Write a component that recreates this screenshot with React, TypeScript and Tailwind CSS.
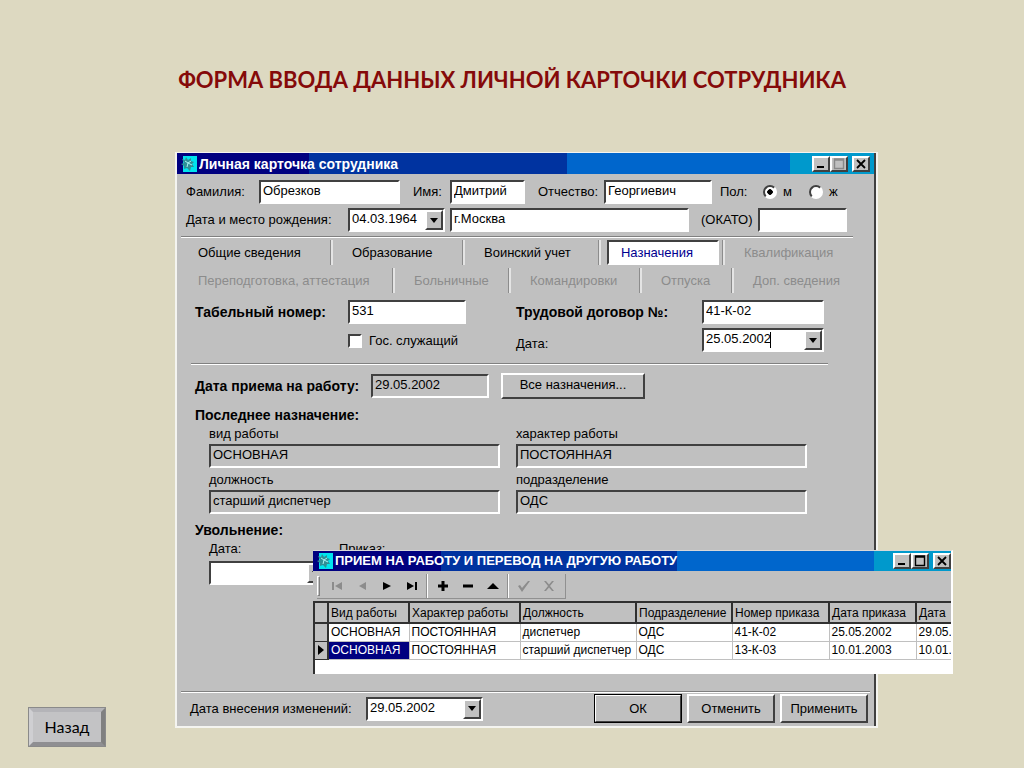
import type { ReactNode } from "react";
import clsx from "clsx";

const sunken =
  "border-2 border-t-[#404040] border-l-[#404040] border-r-white border-b-white";
const raised =
  "border-2 border-t-white border-l-white border-r-[#404040] border-b-[#404040]";

const AppIcon = () => (
  <svg viewBox="0 0 16 16" className="h-4 w-4 shrink-0" aria-hidden="true">
    <rect x="2" width="14" height="16" fill="#00e5ee" />
    <path
      d="M1 3l3 1 1-3 2 3 3-2 0 3 3 1-2 2 2 3-3 0-1 4-3-3-3 1 0-3-3-2 3-1z"
      fill="#2f8f96"
    />
    <path d="M4 5l3 2 3-2M7 7l-1 4M7 7l4 2" stroke="#a8f4f4" fill="none" />
  </svg>
);

const WindowButton = ({
  label,
  className,
  children,
}: {
  label: string;
  className?: string;
  children: ReactNode;
}) => (
  <button
    type="button"
    aria-label={label}
    className={clsx("h-4 w-[18px] bg-[#c0c0c0]", raised, className)}
  >
    <svg viewBox="0 0 14 12" className="h-3 w-3.5" aria-hidden="true">
      {children}
    </svg>
  </button>
);

const TitleBar = ({
  title,
  dimMaximize,
  className,
}: {
  title: string;
  dimMaximize?: boolean;
  className: string;
}) => (
  <header className={clsx("flex items-center font-bold", className)}>
    <AppIcon />
    <h2 className="ml-0.5 flex-1 truncate text-white">{title}</h2>
    <WindowButton label="Свернуть">
      <rect x="3" y="8" width="7" height="2" />
    </WindowButton>
    <WindowButton label="Развернуть">
      <path
        d="M2.5 1v9.5h9V1zM2 2h10"
        fill="none"
        stroke={dimMaximize ? "#888888" : "#000000"}
        strokeWidth="1.4"
      />
    </WindowButton>
    <WindowButton label="Закрыть" className="ml-1">
      <path d="M3 2l8 8M11 2l-8 8" stroke="#000" strokeWidth="1.8" />
    </WindowButton>
  </header>
);

const Field = ({
  id,
  value,
  className,
  readOnly,
}: {
  id: string;
  value?: string;
  className: string;
  readOnly?: boolean;
}) => (
  <input
    id={id}
    type="text"
    defaultValue={value}
    readOnly={readOnly}
    className={clsx(
      "h-6 px-0.5 pb-1 outline-none",
      sunken,
      readOnly ? "bg-[#c0c0c0]" : "bg-white",
      className
    )}
  />
);

const DateSelect = ({
  id,
  value,
  className,
  caret,
}: {
  id: string;
  value: string;
  className: string;
  caret?: boolean;
}) => (
  <div className={clsx("relative h-6 bg-white", sunken, className)}>
    <select
      id={id}
      defaultValue={value}
      className="block h-5 w-full appearance-none px-0.5 pb-0.5 outline-none"
    >
      <option>{value}</option>
    </select>
    {caret && (
      <span className="pointer-events-none absolute top-0.5 left-[66px] h-4 w-px bg-black" />
    )}
    <span
      className={clsx(
        "pointer-events-none absolute top-0 right-0 flex h-5 w-[18px] items-center justify-center bg-[#c0c0c0]",
        raised
      )}
    >
      <svg viewBox="0 0 8 5" className="h-[5px] w-2" aria-hidden="true">
        <path d="M0 0h8L4 5z" />
      </svg>
    </span>
  </div>
);

const Divider = ({ className }: { className?: string }) => (
  <hr
    className={clsx(
      "h-0.5 border-0 border-t border-b border-t-[#808080] border-b-white",
      className
    )}
  />
);

const Tab = ({
  children,
  className,
  disabled,
}: {
  children: ReactNode;
  className?: string;
  disabled?: boolean;
}) => (
  <button
    type="button"
    role="tab"
    aria-selected={false}
    disabled={disabled}
    className={clsx(
      "h-[25px] pl-[19px] text-left whitespace-nowrap disabled:text-[#8c8c8c]",
      className
    )}
  >
    {children}
  </button>
);

const tabEdge = "border-r-2 border-r-[#e4e4e4] shadow-[inset_-1px_0_0_#8c8c8c]";

const NavButton = ({
  label,
  disabled,
  d,
}: {
  label: string;
  disabled?: boolean;
  d: string;
}) => (
  <button
    type="button"
    aria-label={label}
    disabled={disabled}
    className="flex h-6 w-[25px] items-center justify-center text-black disabled:text-[#8c8c8c]"
  >
    <svg
      viewBox="0 0 12 12"
      className="h-3 w-3"
      fill="currentColor"
      aria-hidden="true"
    >
      <path d={d} />
    </svg>
  </button>
);

const columns = [
  "Вид работы",
  "Характер работы",
  "Должность",
  "Подразделение",
  "Номер приказа",
  "Дата приказа",
  "Дата",
];

const rows = [
  ["ОСНОВНАЯ", "ПОСТОЯННАЯ", "диспетчер", "ОДС", "41-К-02", "25.05.2002", "29.05."],
  ["ОСНОВНАЯ", "ПОСТОЯННАЯ", "старший диспетчер", "ОДС", "13-К-03", "10.01.2003", "10.01."],
];

const TransfersWindow = () => (
  <section className="absolute top-[397px] -right-[77px] left-[136px] border-t border-r-2 border-t-[#d8d8d8] border-r-white bg-[#c0c0c0]">
    <TitleBar
      title="ПРИЕМ НА РАБОТУ И ПЕРЕВОД НА ДРУГУЮ РАБОТУ"
      className="h-5 bg-[linear-gradient(90deg,#000080_20%,#0033a0_20%,#0033a0_57%,#0066cc_57%,#0066cc_88%,#0099cc_88%)] pl-1"
    />
    <div className="flex h-[30px] items-center pl-1">
      <div className="flex items-center border-r border-b border-[#909090] pr-1">
        <span className="mr-1 h-5 w-[3px] border border-t-white border-r-[#808080] border-b-[#808080] border-l-white" />
        <NavButton label="Первая" disabled d="M1 2h2v8h-2zM11 2v8L4 6z" />
        <NavButton label="Предыдущая" disabled d="M10 2v8L3 6z" />
        <NavButton label="Следующая" d="M2 2v8l8-4z" />
        <NavButton label="Последняя" d="M1 2v8l7-4zM9 2h2v8h-2z" />
        <span className="mx-0.5 h-6 w-0.5 border-r border-l border-r-white border-l-[#909090]" />
        <NavButton label="Добавить" d="M4.500 1h3v3.500h3.500v3h-3.500v3.500h-3v-3.500h-3.500v-3h3.500z" />
        <NavButton label="Удалить" d="M1 4.500h10v3h-10z" />
        <NavButton label="Изменить" d="M0 9h12L6 3z" />
        <span className="mx-0.5 h-6 w-0.5 border-r border-l border-r-white border-l-[#909090]" />
        <NavButton label="Сохранить" disabled d="M0 6l2-1 2 3 6-7 2 0-8 11z" />
        <NavButton label="Отмена" disabled d="M1 1h2l3 3.500 3-3.500h2l-4 5 4 5h-2l-3-3.500-3 3.500h-2l4-5z" />
      </div>
    </div>
    <div className="overflow-hidden border-t-2 border-l-2 border-[#303030] bg-white pb-3.5">
      <table className="w-full table-fixed border-collapse text-[12px] leading-4">
        <colgroup>
          <col className="w-[13px]" />
          <col className="w-[81px]" />
          <col className="w-[111px]" />
          <col className="w-[116px]" />
          <col className="w-[96px]" />
          <col className="w-[97px]" />
          <col className="w-[87px]" />
          <col />
        </colgroup>
        <thead>
          <tr className="h-5 bg-[#c0c0c0]">
            <th className="border-r-2 border-b-2 border-[#303030]" />
            {columns.map((name, i) => (
              <th
                key={i}
                scope="col"
                className="border-r-2 border-b-2 border-[#303030] pl-0.5 text-left font-normal whitespace-nowrap last:border-r-0"
              >
                {name}
              </th>
            ))}
          </tr>
        </thead>
        <tbody>
          {rows.map((row, r) => (
            <tr key={r} className="h-[18px]">
              <td className="border-r-2 border-b border-[#303030] bg-[#c0c0c0]">
                {r === 1 && (
                  <svg viewBox="0 0 6 10" className="mx-auto h-2.5 w-1.5">
                    <path d="M0 0v10l6-5z" />
                  </svg>
                )}
              </td>
              {row.map((cell, c) => (
                <td
                  key={c}
                  className={clsx(
                    "border-r border-b border-[#c0c0c0] pl-0.5 whitespace-nowrap last:border-r-0",
                    r === 1 && c === 0 && "bg-[#000080] text-white"
                  )}
                >
                  {cell}
                </td>
              ))}
            </tr>
          ))}
        </tbody>
      </table>
    </div>
  </section>
);

const assignments = [
  { id: "kind", label: "вид работы", value: "ОСНОВНАЯ" },
  { id: "nature", label: "характер работы", value: "ПОСТОЯННАЯ" },
  { id: "position", label: "должность", value: "старший диспетчер" },
  { id: "unit", label: "подразделение", value: "ОДС" },
];

const strong = "text-[14px] leading-4 font-bold";
const radio =
  "h-3.5 w-3.5 appearance-none rounded-full bg-white checked:bg-[radial-gradient(circle,#000_2.5px,#fff_3px)]";
const footerButton = "h-[29px] w-[88px] bg-[#c0c0c0]";

const EmployeeCard = () => (
  <section className="relative mr-[146px] mb-[19px] min-w-0 flex-1 border-2 border-t border-[#f4f4f0] bg-[#c0c0c0] font-['Liberation_Sans',Arial,sans-serif] text-[13px] leading-4 text-black">
    <div className="border-r-2 border-[#404040]">
      <TitleBar
        title="Личная карточка сотрудника"
        dimMaximize
        className="h-[21px] bg-[linear-gradient(90deg,#000080_19%,#0033a0_19%,#0033a0_56%,#0066cc_56%,#0066cc_88%,#0099cc_88%)] pr-1 pl-1 text-[14px]"
      />

      <div className="mt-1.5 flex items-center pl-[9px]">
        <label htmlFor="surname" className="w-[73px]">Фамилия:</label>
        <Field id="surname" value="Обрезков" className="w-[141px]" />
        <label htmlFor="name" className="ml-[13px] w-[37px]">Имя:</label>
        <Field id="name" value="Дмитрий" className="w-[75px]" />
        <label htmlFor="patronymic" className="ml-[13px] w-[66px]">Отчество:</label>
        <Field id="patronymic" value="Георгиевич" className="w-[108px]" />
        <fieldset className="ml-2 flex items-center">
          <legend className="float-left w-[43px]">Пол:</legend>
          <label className="flex w-[46px] items-center gap-1.5">
            <input type="radio" name="sex" defaultChecked className={clsx(radio, sunken)} />
            м
          </label>
          <label className="flex items-center gap-1.5">
            <input type="radio" name="sex" className={clsx(radio, sunken)} />
            ж
          </label>
        </fieldset>
      </div>

      <div className="mt-1 flex items-center pl-[9px]">
        <label htmlFor="birth" className="w-[162px]">Дата и место рождения:</label>
        <DateSelect id="birth" value="04.03.1964" className="w-[97px]" />
        <input
          aria-label="Место рождения"
          defaultValue="г.Москва"
          className={clsx("ml-[5px] h-6 w-[239px] bg-white px-0.5 pb-1", sunken)}
        />
        <label htmlFor="okato" className="ml-3 w-[57px]">(ОКАТО)</label>
        <Field id="okato" className="w-[89px]" />
      </div>

      <Divider className="mt-1 mr-[21px] ml-1" />

      <div role="tablist" className="mt-0.5 flex flex-col gap-[3px] pl-0.5">
        <div className="flex items-center">
          <Tab className={clsx("w-[154px]", tabEdge)}>Общие сведения</Tab>
          <Tab className={clsx("w-[132px]", tabEdge)}>Образование</Tab>
          <Tab className={clsx("w-[136px]", tabEdge)}>Воинский учет</Tab>
          <button
            type="button"
            role="tab"
            aria-selected={true}
            className={clsx(
              "ml-1.5 h-[25px] w-[112px] bg-white pr-3 text-center text-[#000090]",
              sunken
            )}
          >
            Назначения
          </button>
          <span className={clsx("h-[25px] w-1.5", tabEdge)} />
          <Tab disabled>Квалификация</Tab>
        </div>
        <div className="flex items-center">
          <Tab disabled className={clsx("w-[216px]", tabEdge)}>Переподготовка, аттестация</Tab>
          <Tab disabled className={clsx("w-[116px]", tabEdge)}>Больничные</Tab>
          <Tab disabled className={clsx("w-[131px]", tabEdge)}>Командировки</Tab>
          <Tab disabled className={clsx("w-[92px]", tabEdge)}>Отпуска</Tab>
          <Tab disabled>Доп. сведения</Tab>
        </div>
      </div>

      <div className="mt-[7px] flex pl-[18px]">
        <div className="w-[321px]">
          <div className="flex items-center">
            <label htmlFor="number" className={clsx("w-[153px]", strong)}>Табельный номер:</label>
            <Field id="number" value="531" className="w-[118px]" />
          </div>
          <label className="mt-[9px] ml-[153px] flex items-center gap-[7px]">
            <input
              type="checkbox"
              className={clsx("h-3.5 w-3.5 appearance-none bg-white", sunken)}
            />
            Гос. служащий
          </label>
        </div>
        <div className="flex flex-col gap-1">
          <div className="flex items-center">
            <label htmlFor="contract" className={clsx("w-[186px]", strong)}>Трудовой договор №:</label>
            <Field id="contract" value="41-К-02" className="w-[122px]" />
          </div>
          <div className="flex items-end">
            <label htmlFor="contract-date" className="w-[186px]">Дата:</label>
            <DateSelect id="contract-date" value="25.05.2002" className="w-[122px]" caret />
          </div>
        </div>
      </div>

      <Divider className="mt-[11px] mr-[46px] ml-3.5" />

      <div className="mt-2 flex items-center pl-[18px]">
        <label htmlFor="hired" className={clsx("w-44", strong)}>Дата приема на работу:</label>
        <Field id="hired" value="29.05.2002" readOnly className="w-[118px]" />
        <button
          type="button"
          className={clsx("ml-3 h-[26px] w-36 bg-[#c0c0c0] pb-0.5", raised)}
        >
          Все назначения...
        </button>
      </div>

      <h3 className={clsx("mt-2 pl-[18px]", strong)}>Последнее назначение:</h3>
      <div className="mt-[3px] box-content grid w-[598px] grid-cols-2 gap-x-4 gap-y-1 pl-8">
        {assignments.map((item) => (
          <div key={item.id} className="flex flex-col">
            <label htmlFor={item.id}>{item.label}</label>
            <Field id={item.id} value={item.value} readOnly className="mt-0.5 w-full" />
          </div>
        ))}
      </div>

      <h3 className={clsx("mt-2 pl-[18px]", strong)}>Увольнение:</h3>
      <div className="mt-[3px] flex pl-8">
        <div className="flex w-[130px] flex-col gap-1">
          <label htmlFor="fired">Дата:</label>
          <DateSelect id="fired" value="" className="w-[118px]" />
        </div>
        <span>Приказ:</span>
      </div>

      <Divider className="mt-[106px] mr-1 ml-1" />

      <footer className="mt-px flex items-center pr-1.5 pb-[3px] pl-[13px]">
        <label htmlFor="changed" className="w-[176px]">Дата внесения изменений:</label>
        <DateSelect id="changed" value="29.05.2002" className="w-[117px]" />
        <div className="ml-auto flex gap-[5px]">
          <button
            type="button"
            className={clsx(footerButton, raised, "outline-1 -outline-offset-1 outline-black")}
          >
            ОК
          </button>
          <button type="button" className={clsx(footerButton, raised)}>Отменить</button>
          <button type="button" className={clsx(footerButton, raised)}>Применить</button>
        </div>
      </footer>
    </div>
    <TransfersWindow />
  </section>
);

export default function App() {
  return (
    <main className="min-h-screen bg-[#ddd9c1] pb-5">
      <h1 className="pt-16 text-center font-['Lato',sans-serif] text-[22px] leading-8 font-bold text-[#850a0a]">
        ФОРМА ВВОДА ДАННЫХ ЛИЧНОЙ КАРТОЧКИ СОТРУДНИКА
      </h1>
      <div className="mt-14 flex">
        <nav className="w-[175px] shrink-0 self-end pl-7">
          <button
            type="button"
            className="block h-10 w-[78px] border-[5px] border-t-[#b4b4b8] border-r-[#808080] border-b-[#8f8f92] border-l-[#cfcfd2] bg-[#c3c3c5] font-['Lato',sans-serif] text-base text-black outline-1 -outline-offset-1 outline-[#8a8a8a]"
          >
            Назад
          </button>
        </nav>
        <EmployeeCard />
      </div>
    </main>
  );
}
